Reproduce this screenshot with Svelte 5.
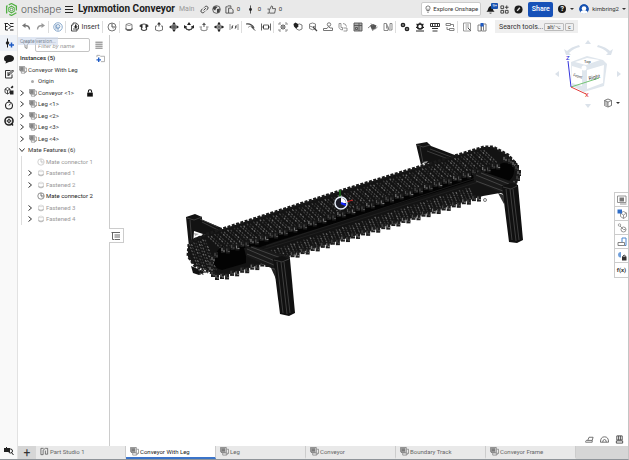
<script lang="ts">
  type Shape = { d: string; fill?: string; stroke?: string; w?: number };

  const ink = '#3b3b3b';
  const blue = '#1f5bc4';

  const line = (d: string, stroke = ink, w = 1.8): Shape => ({ d, stroke, w });
  const solid = (d: string, fill = ink): Shape => ({ d, fill });
  const circle = (x: number, y: number, r: number) =>
    `M${x - r} ${y}a${r} ${r} 0 1 0 ${r * 2} 0a${r} ${r} 0 1 0 ${-r * 2} 0`;

  // every icon is drawn on a 20 x 20 grid
  const icons: Record<string, Shape[]> = {
    versions: [line('M1 3h7M3 3v13h5M3 9h4M12 3h7M14 9h5M12 16h7', '#222', 2), line('M8 4l6 5-5 5', '#222', 2)],
    createVersion: [line('M7 1v18', '#222', 2), solid(circle(7, 10, 3.5), '#222'), line('M15 9v10M10 14h10', blue, 3)],
    chat: [solid('M10 2c6 0 10 3 10 7s-4 7-10 7l-7 3 1-4C1 14 0 12 0 9c0-4 4-7 10-7', '#1b1b1b')],
    note: [line('M13 3H3v15h13v-7M6 8h5M6 12h3', '#333', 2), line('M9 13l1-4 7-7 2 2-7 7z', '#222', 2)],
    cubes: [line('M2 8l5-3 5 3v7l-5 3-5-3zM2 8l5 3 5-3M7 11v7', '#222', 1.6), solid('M12 11h7v8h-7zM13 5l4-4 2 3-3 3z', '#222')],
    stopwatch: [line(circle(10, 11, 7), '#222', 2.2), line('M8 1h4M10 1v3M10 11l3-4', '#222', 2)],
    target: [line(circle(10, 10, 8), '#222', 3.2), line(circle(10, 10, 3), '#222', 2), line('M10 4v12M4 10h12', '#555', 1.2), line('M14 14l4 5', '#222', 3)],
    camera: [solid('M0 4h12v8H0z', '#222'), line(circle(13, 10, 4), '#222', 2), line('M15 13l4 5M3 5l3-3', '#222', 2)],
    undo: [line('M17 15c0-6-3-8-10-8', '#777', 2.6), solid('M9 2v10L2 7z', '#777')],
    redo: [line('M3 15c0-6 3-8 10-8', '#999', 2.6), solid('M11 2v10l7-5z', '#999')],
    sync: [line(circle(10, 10, 8.5), '#7d9fc6', 1.8), line(circle(10, 9, 3.8), '#7d9fc6', 2), line('M10 9v8M6 5v10', '#7d9fc6', 2)],
    insert: [line('M6 6H3v12h11v-4M6 6V2h6l5 4v8H6', ink, 1.8), solid('M10 5h3v4h3l-4.500 4L7 9h3z', '#222')],
    mateConnector: [line(circle(10, 10, 8), '#666', 1.8), line('M10 3v7h7', '#555', 2), line('M10 10l4 5', '#999', 1.5)],
    fastened: [solid('M3 12v3q7 6 14 0v-3q-7 5-14 0', '#444'), line('M4 5v9q6 5 12 0V5', '#777', 1.8), line('M4 5q6-5 12 0q-6 4-12 0', '#777', 1.5)],
    revolute: [line('M5 10v5q5 4 10 0v-5M2 7q8-6 16 0', '#444', 2.4), solid('M0 8l7-3v7zM20 8l-7-3v7z', '#222')],
    slider: [line('M3 8v8q7 4 14 0V8M3 8h3M14 8h3', '#666', 1.8), solid('M10 0l4 5H6zM9 5h2v4H9z', '#333')],
    planar: [line('M10 2v16M2 10h16', '#222', 2), line('M6 6h8v8H6z', '#444', 2), solid('M10 0l3 4H7zM10 20l3-4H7zM0 10l4-3v6zM20 10l-4-3v6z', '#222')],
    cylindrical: [line('M4 8v6q6 5 12 0V8M2 11q8 9 16 0', '#444', 2), solid('M10 0l4 6H6zM0 13V6l6 4zM20 13V6l-6 4z', '#222')],
    pinSlot: [line('M4 11v5q6 3 12 0v-5M1 10h5M14 10h5', '#777', 1.8), solid('M10 1l4 5H6zM9 5h2v5H9z', '#555')],
    ball: [line(circle(10, 10, 5), '#444', 1.8), line('M10 1v18M1 10h18', '#333', 1.8), solid('M10 0l3 4H7zM10 20l3-4H7zM0 10l4-3v6zM20 10l-4-3v6z', '#222')],
    parallel: [line('M2 4v12M18 4v12M5 14l3-8M12 14l3-8', '#888', 1.8), solid('M4 10l4-3v6zM16 10l-4-3v6z', '#555')],
    tangent: [line('M0 4q11-2 16 8', '#444', 2.4), line('M4 11q4-5 9-2M12 8l7 10', '#888', 1.6), solid('M9 9h5l3 8z', '#444')],
    width: [line('M1 3v14M19 3v14M5 6h10v8H5z', '#555', 1.8), solid('M2 10l4-3v6zM18 10l-4-3v6z', '#333')],
    group: [line('M2 6V2h4M14 2h4v4M18 14v4h-4M6 18H2v-4M5 5l10 10M15 5L5 15', '#777', 1.6), line(circle(10, 10, 4), '#555', 2)],
    replicate: [line('M6 7q7-6 12-1v8q-6 5-11 0z', '#666', 1.7), solid('M1 4l4-3 5 3 1 5-5 4-4-4z', '#222')],
    snap: [line('M3 4q6-4 12 0v9q-6 5-12 0zM3 8q6 4 12 0', '#777', 1.8), line('M10 10l8 8', '#444', 2.4)],
    linear: [line('M1 17h18v-5h-5l-3-3-3 4H1z', '#666', 1.8), line(circle(12, 5, 3.5), '#666', 1.7)],
    circular: [line('M2 3v8q2 5 7 5v-5H6V3zM11 18h7v-6h-7', '#888', 1.7), line('M10 3q6 0 7 6', '#888', 1.7)],
    frame: [solid('M2 2h16v16H2z', '#aaa'), line('M2 2h16v16H2zM2 7h16M12 2v16M5 11h4v4H5z', '#555', 1.8)],
    explode: [solid('M4 7l6-3 7 3-2 6-7 3z', '#555'), line('M0 12l6-5M13 15l6-5M6 3l3 4M9 18l2-4', '#777', 1.8)],
    section: [line('M2 3h5l5 13h6V3h-4v11M2 3v14h8V9', '#777', 1.7), line('M7 4v9', '#888', 1.8)],
    gears: [line(circle(6, 6, 3), '#222', 3.4), line(circle(14, 14, 3), '#222', 3.4)],
    gearCog: [line(circle(10, 9, 5), '#222', 3.2), line('M2 18h16M10 1v3M3 4l3 2M17 4l-3 2M2 11h3M15 11h3', '#222', 2.2)],
    screen: [line('M1 3h18v6H1zM5 3v6M10 3v6M15 3v6M4 13h12M5 18h10', '#333', 2)],
    relation: [line('M2 3h9v4H2zM9 13h9v4H9zM11 5h6v5M9 15H4v-5', '#777', 1.8)],
    bom: [line('M3 2h14v16H3zM7 6h7M7 10h7M7 14h3', '#888', 1.7), line('M12 12l5 5', '#444', 2)],
    appearance: [line('M2 6h6v12H2zM9 4h9v14H9zM13 5v12', '#777', 1.8), solid('M7 2h6v7H7z', blue)],
    link: [line('M8 12l5-5M9 6l3-3q3-1 5 1t0 5l-3 3M11 14l-3 3q-3 1-5-1t0-5l3-3', '#333', 2)],
    globe: [line(circle(10, 10, 8.5), '#444', 1.8), solid('M3 5q6-4 9 0l-3 3-2 4-5-3zM11 9l7-1-2 8-5 2z', '#444')],
    copy: [line('M6 4H2v14h6M8 7h6l4 4v7H8zM6 2h7v4', '#444', 1.9)],
    commit: [line('M10 1v18', '#333', 1.8), solid(circle(10, 10, 3.2), '#222')],
    thumb: [line('M1 9h4v9H1M6 10l4-8q4 0 2 6h7l-2 10H6', '#444', 1.8)],
    bulb: [line('M7 14q0-2-2-4-2-7 5-8 7 1 5 8-2 2-2 4zM8 18h4M10 9v5', '#444', 1.7)],
    bell: [solid('M1 15q3-2 4-7 1-5 5-6 4 1 5 6 1 5 4 7zM7 17h6q-3 4-6 0', '#1b1b1b')],
    apps: [line('M2 2h6v6H2zM2 12h6v6H2zM12 12h6v6h-6z', '#333', 2), line('M15 1v8M11 5h8', '#333', 2)],
    learn: [solid(circle(10, 10, 9), '#1b1b1b'), line('M7 13l6-7', '#ddd', 3)],
    filter: [line('M3 4h14l-5 6v7l-4-2v-5z', '#888', 1.8)],
    list: [line('M1 3h18M1 8h18M1 13h18M1 18h18', '#555', 2)],
    folder: [line('M2 7V3h6l2 2h9v12H11', '#999', 1.7), line('M6 8v10M1 13h10', blue, 3)],
    assembly: [solid('M2 2h10v11H2z', '#9a9a9a'), line('M1 1h13v12H5L1 10zM4 5h7M4 8h7', '#666', 1.5), line('M6 14v4h8l5-4V5h-4M14 18v-4h5', '#777', 1.5)],
    part: [line('M8 3H2v14h5V7l5-4h5v13h-5V8', '#555', 1.7)],
    lock: [solid('M3 9h14v10H3z', '#111'), line('M6 9V6q0-4 4-4t4 4v3', '#111', 2.6)],
    treeToggle: [line('M1 3h17M7 8h11M7 12h11M7 17h11M3 3v14h3', '#555', 1.8)],
    dimension: [line('M1 15l2-3h3l3-7h9l-2 7H6M16 12v4H1', '#555', 1.8)],
    protractor: [line('M1 16q0-12 9-12t9 12zM6 16q0-6 4-6t4 6', '#555', 1.8)],
    scale: [line('M4 2h12v9H4zM8 2v9M12 2v9M3 18h14V13H3z', '#444', 2)],
    cube: [line('M3 5l7-3 7 3v10l-7 3-7-3z', '#555', 1.6), solid('M3 5l7 3v10l-7-3z', '#bcbcbc'), line('M3 5l7 3 7-3M10 8v10', '#666', 1.5)],
    props: [line('M1 2h17v13H1zM6 18h13', '#888', 1.8), solid('M5 5h9v8H5z', '#777')],
    parts3d: [line('M7 8l6-3 6 3v7l-6 4-6-4zM7 8l6 4 6-4M13 12v7', '#888', 1.7), solid('M1 1h9v8H1z', '#2f6dc6')],
    mates: [line(circle(5, 4, 2.5), '#999', 1.8), line(circle(13, 13, 5), '#888', 1.8), line('M6 6l7 7h4', '#888', 1.8)],
    sheet: [line('M10 10V2h8v15h-3', '#4a87cf', 2), line('M2 11h13v6H2z', '#777', 1.8)],
    paint: [solid('M2 8q0-6 6-6v11q-5 1-6-5', '#6f9fdb'), solid('M10 11h9v8h-9z', '#333'), line('M11 11q3-6 7 0', '#333', 1.8)]
  };

  const toolGroups: string[][] = [
    ['mateConnector'],
    ['fastened', 'revolute', 'slider', 'planar', 'cylindrical', 'pinSlot', 'ball', 'parallel'],
    ['tangent', 'width'],
    ['group', 'replicate', 'snap', 'linear', 'circular', 'frame', 'explode', 'section'],
    ['gears', 'gearCog', 'screen', 'relation'],
    ['bom', 'appearance']
  ];

  const railItems = [
    ['createVersion', 'Create version'],
    ['chat', 'Comments'],
    ['note', 'Notes'],
    ['cubes', 'Configurations'],
    ['stopwatch', 'History'],
    ['target', 'Search']
  ];

  const instances = [
    { label: 'Conveyor <1>', locked: true },
    { label: 'Leg <1>' },
    { label: 'Leg <2>' },
    { label: 'Leg <3>' },
    { label: 'Leg <4>' }
  ];

  const mates = [
    { label: 'Mate connector 1', dim: true, leaf: true },
    { label: 'Fastened 1', dim: true },
    { label: 'Fastened 2', dim: true },
    { label: 'Mate connector 2', leaf: true },
    { label: 'Fastened 3', dim: true },
    { label: 'Fastened 4', dim: true }
  ];

  const tabs = ['Part Studio 1', 'Conveyor With Leg', 'Leg', 'Conveyor', 'Boundary Track', 'Conveyor Frame'];
  const sideTools = ['props', 'parts3d', 'mates', 'sheet', 'paint'];

  let activeTab = $state('Conveyor With Leg');
  let filter = $state('');

  // belt texture: small link segments laid on a skewed strip
  const shades = ['#525252', '#2e2e2e', '#6a6a6a', '#383838', '#454545'];

  function strip(x0: number, y0: number, dx: number, dy: number, cols: number, rows: number, rx: number, ry: number) {
    const out: string[] = ['', '', '', '', ''];
    for (let c = 0; c < cols; c++) {
      for (let r = 0; r < rows; r++) {
        const x = x0 + (dx * c) / cols + (rx * r) / rows;
        const y = y0 + (dy * c) / cols + (ry * r) / rows + (c % 2);
        out[(c * 7 + r * 5 + c * r * r) % 5] += `M${x.toFixed(1)} ${y.toFixed(1)}l1.200 1.600`;
      }
    }
    return out;
  }

  function edge(x0: number, y0: number, dx: number, dy: number, count: number) {
    return Array.from({ length: count }, (_, i) => ({
      x: x0 + (dx * i) / count,
      y: y0 + (dy * i) / count + (i % 2) * 2,
      light: i % 3 === 0
    }));
  }

  const topLinks = strip(208, 236, 279, -88, 86, 6, 14, 13);
  const lowLinks = strip(258, 254, 214, -68, 66, 5, 5, 12);
  const capLinks = strip(189, 244, 18, -6, 8, 10, 12, 32);
  const topTeeth = edge(221, 247, 280, -87, 58);
  const lowTeeth = edge(220, 273, 262, -81, 52);
  const rightTeeth = [[503, 156], [508, 158], [512, 161], [515, 165], [517, 170], [516, 175], [513, 180]];
  const leftTeeth = [[214, 252], [211, 256], [209, 261], [209, 266], [211, 271], [215, 274]];
</script>

{#snippet icon(name: string)}
  <svg class="icon" viewBox="0 0 20 20" aria-hidden="true">
    {#each icons[name] as s}
      <path d={s.d} fill={s.fill ?? 'none'} stroke={s.stroke ?? 'none'} stroke-width={s.w ?? 0} />
    {/each}
  </svg>
{/snippet}

{#snippet chevron(open: boolean)}
  <svg class="chevron" viewBox="0 0 6 6" aria-hidden="true">
    <path d={open ? 'M.5 1.500L3 4.500 5.500 1.500' : 'M1.500 .5L4.500 3 1.500 5.500'} />
  </svg>
{/snippet}

{#snippet teeth(items: { x: number; y: number; light: boolean }[])}
  {#each items as t}
    <rect x={t.x} y={t.y} width="4" height="6" fill="#1c1c1c" />
    <path d={`M${t.x + 1} ${t.y + 1}v3M${t.x + 2} ${t.y + 4}h2`} stroke={t.light ? '#808080' : '#505050'} stroke-width="1" />
  {/each}
{/snippet}

<div class="app">
  <header>
    <a class="brand" href="#home" aria-label="Home">
      <svg class="logo" viewBox="0 0 24 24" aria-hidden="true">
        <path d="M7 3.500L12 1l9 5v8M21 18l-9 5-4-2M4 19l-1-1V6l2-1" fill="none" stroke="#52b043" stroke-width="2.4" />
        <path d="M12 6l5 3v6l-5 3-5-3V9z" fill="#fff" stroke="#52b043" stroke-width="2" />
        <circle cx="12" cy="12" r="2.500" fill="none" stroke="#3c7d35" stroke-width="1.500" />
      </svg>
      <span>onshape</span>
    </a>
    <button class="menu" aria-label="Menu"><i></i><i></i><i></i></button>
    <h1>Lynxmotion Conveyor</h1>
    <span class="branch">Main</span>
    <div class="doc-tools">
      <button aria-label="Share link">{@render icon('link')}</button>
      <button aria-label="Public">{@render icon('globe')}</button>
      <button class="count">{@render icon('copy')}0</button>
      <button class="count">{@render icon('commit')}0</button>
      <button class="count">{@render icon('thumb')}0</button>
    </div>
    <div class="account">
      <button class="explore">{@render icon('bulb')}Explore Onshape</button>
      <button class="round bell" aria-label="Notifications">{@render icon('bell')}<span class="badge">9+</span></button>
      <button class="round" aria-label="Apps">{@render icon('apps')}</button>
      <button class="round" aria-label="Learning">{@render icon('learn')}</button>
      <button class="share">Share</button>
      <button class="help" aria-label="Help"><b>?</b><span class="caret"></span></button>
      <button class="user">
        <svg class="avatar" viewBox="0 0 22 22" aria-hidden="true">
          <circle cx="11" cy="11" r="11" fill="#1651b0" />
          <circle cx="11" cy="10" r="5" fill="#fff" />
          <path d="M2 22q0-8 9-8t9 8z" fill="#fff" />
        </svg>
        kimbring2<span class="caret"></span>
      </button>
    </div>
  </header>

  <div class="toolbar">
    <button class="tool rail-head" aria-label="Versions and history">{@render icon('versions')}</button>
    <button class="tool" aria-label="Undo">{@render icon('undo')}</button>
    <button class="tool" aria-label="Redo">{@render icon('redo')}</button>
    <span class="sep"></span>
    <button class="tool" aria-label="Update">{@render icon('sync')}</button>
    <span class="sep"></span>
    <button class="insert">{@render icon('insert')}Insert</button>
    {#each toolGroups as group}
      <span class="sep"></span>
      {#each group as name}
        <button class="tool" aria-label={name}>{@render icon(name)}</button>
      {/each}
    {/each}
    <button class="search">Search tools... <kbd>alt/⌥</kbd><kbd>c</kbd></button>
  </div>

  <main>
    <nav class="rail">
      {#each railItems as [name, label], i}
        <button class:active={i === 0} aria-label={label}>{@render icon(name)}</button>
      {/each}
      <button class="last" aria-label="Camera">{@render icon('camera')}</button>
    </nav>

    <aside>
      <div class="filter">
        {@render icon('filter')}
        <input type="text" placeholder="Filter by name" aria-label="Filter by name" bind:value={filter} />
        <button aria-label="List options">{@render icon('list')}</button>
        <span class="tooltip">Create version...</span>
      </div>
      <div class="heading">
        <h2>Instances (5)</h2>
        <button aria-label="New folder">{@render icon('folder')}</button>
      </div>
      <ul class="tree">
        <li class="root">{@render icon('assembly')}Conveyor With Leg</li>
        <li class="origin"><span class="dot"></span>Origin</li>
        {#each instances as item}
          <li>
            {@render chevron(false)}{@render icon('assembly')}{item.label}
            {#if item.locked}<span class="lock">{@render icon('lock')}</span>{/if}
          </li>
        {/each}
        <li class="folder">{@render chevron(true)}Mate Features (6)</li>
        {#each mates as item}
          <li class="mate" class:dim={item.dim}>
            <span class="slot">{#if !item.leaf}{@render chevron(false)}{/if}</span>
            {@render icon(item.leaf ? 'mateConnector' : 'fastened')}{item.label}
          </li>
        {/each}
      </ul>
    </aside>

    <section class="viewport">
      <svg class="model" viewBox="110 35 518 411" preserveAspectRatio="xMidYMid meet" role="img" aria-label="Conveyor assembly">
        <!-- rear legs -->
        <path d="M186 217l9-3 7 3v3l20 8-5 11-14-5-9-3-1 14-4 2z" fill="#121212" />
        <path d="M187 218l7 2 8-3M190 220l2 24M202 222l18 9M200 219l18 8" stroke="#3c3c3c" fill="none" />
        <path d="M194 233l5 1-4 2z" fill="#aaa" />
        <path d="M416 144l11-2 4 4 29 11-5 9-32-3-2 2z" fill="#121212" />
        <path d="M417 145l6 2 7-2M420 147l3 16M427 151l24 9M430 149l24 9" stroke="#3c3c3c" fill="none" />
        <path d="M423 162l5-1-3 4z" fill="#999" />
        <!-- belt body -->
        <path d="M191 266l2 7 6 2 6-3z" fill="#111" />
        <path d="M207 234L340 191 484 147l9 0 15 8 8 9 2 12-3 9-15 8-17 3-145 45-115 35-7-2-21-8-7-9 0-12 6-7z" fill="#131313" />
        <path
          d="M190 242L207 234 340 191 484 147l9 0 15 8 8 9 2 12-3 9M189 244l-1 12 7 10 22 9"
          fill="none"
          stroke="#1a1a1a"
          stroke-width="3"
          stroke-dasharray="3 1.500"
        />
        <g fill="none" stroke-width="1.200">
          {#each topLinks as d, i}<path {d} stroke={shades[i]} />{/each}
          {#each lowLinks as d, i}<path {d} stroke={shades[i]} />{/each}
          {#each capLinks as d, i}<path {d} stroke={shades[i]} />{/each}
        </g>
        {@render teeth(lowTeeth)}
        <!-- inside of the belt loop -->
        <path d="M223 251l24-7 232-73 24-8q9 0 11 6 1 9-9 15l-24-6-54 17-153 47-28 10v11l-24 7q-10-2-8-12 3-9 9-12z" fill="#030303" />
        <path d="M262 250L478 182" stroke="#1f1f1f" />
        <path d="M266 246L476 178" stroke="#292929" stroke-width=".6" />
        {@render teeth(topTeeth)}
        {@render teeth([...rightTeeth, ...leftTeeth].map(([x, y], i) => ({ x, y, light: i % 2 === 0 })))}
        <!-- front left leg -->
        <path d="M244 248l9-2 37 11-2 7-15 5-27-13z" fill="#191919" />
        <path d="M247 249l28 12M251 247l30 11M247 254l27 11" stroke="#444" fill="none" />
        <path d="M273 259l9-3 8 3 5 54-6 3-9-2z" fill="#101010" />
        <path d="M274 260l8 2 7-3M277 262l6 51M284 262l6 51M281 262l6 52" stroke="#3d3d3d" fill="none" />
        <path d="M271 268l5 2v9z" fill="#222" />
        <!-- front right leg -->
        <path d="M473 174l8-3 35 12-1 7-12 4-29-13z" fill="#191919" />
        <path d="M476 175l27 11M481 173l28 11M476 181l27 10" stroke="#444" fill="none" />
        <path d="M502 186l10-3 6 2 5 55-6 3-8-1z" fill="#101010" />
        <path d="M503 187l8 2 6-3M506 189l6 51M513 189l6 51M510 189l6 52" stroke="#3d3d3d" fill="none" />
        <path d="M498 193l6 2v9z" fill="#333" />
        <circle cx="485" cy="200" r="1.500" fill="none" stroke="#777" />
        <!-- busy marker on the mate origin -->
        <path d="M340 197v-7" stroke="#1ba11b" />
        <path d="M346 202l7-2" stroke="#c81e1e" />
        <circle cx="341" cy="203" r="6" fill="#1c1c28" stroke="#e6eef8" stroke-width="1.500" />
        <path d="M341 203v-5a5 5 0 0 1 5 5z" fill="#fff" />
        <path d="M341 203l5 2" stroke="#1426ff" stroke-width="2" />
      </svg>

      <button class="panel-toggle" aria-label="Toggle tree">{@render icon('treeToggle')}</button>

      <svg class="view-cube" viewBox="555 38 68 72" role="img" aria-label="View cube">
        <g fill="#dbe2ea">
          <path d="M588 40l3 4h-6zM588 108l3-4h-6zM555 74l4-3v6zM621 74l-4-3v6z" />
          <path d="M564 49l2 6 5 0-2-2q5-5 11-6l-1-2q-8 2-12 6zM613 49l-2 6-5 0 2-2q-5-5-11-6l1-2q8 2 12 6z" />
        </g>
        <path d="M571 62l16-6 16 4 4 4-3 22-20 6-12-6z" fill="#dfe6ed" />
        <path d="M575 62l12-4 13 2-14 5zM572 66l10 3v17l-10-3zM587 70l17-5-1 18-16 6z" fill="#fff" />
        <circle cx="584" cy="68" r="2.500" fill="#fff" />
        <path d="M571 87l28-9" stroke="#73c473" />
        <path d="M571 87l-3-26" stroke="#3535dd" />
        <path d="M571 87l15 7" stroke="#e23c3c" />
        <text class="axis-z" x="566" y="60" font-size="6">Z</text>
        <text class="axis-x" x="585" y="97" font-size="6">X</text>
        <text x="589" y="80" font-size="5" transform="rotate(-12 589 80)">Right</text>
        <text x="573" y="76" font-size="4" transform="rotate(18 573 76)">Front</text>
        <text x="584" y="63" font-size="4">Top</text>
      </svg>
      <button class="view-menu" aria-label="View options">{@render icon('cube')}<span class="caret"></span></button>

      <div class="side-tools">
        {#each sideTools as name}
          <button aria-label={name}>{@render icon(name)}</button>
        {/each}
        <button class="fx">f(x)</button>
      </div>

      <div class="measure">
        <button aria-label="Measure">{@render icon('dimension')}</button>
        <button aria-label="Protractor">{@render icon('protractor')}</button>
        <button aria-label="Mass properties">{@render icon('scale')}</button>
      </div>
    </section>
  </main>

  <footer>
    <button class="add" aria-label="Add tab">+</button>
    {#each tabs as name}
      <button class="tab" class:active={name === activeTab} onclick={() => (activeTab = name)}>
        {@render icon(name === 'Part Studio 1' ? 'part' : 'assembly')}{name}
      </button>
    {/each}
  </footer>
</div>

<style>
  :global(body) {
    margin: 0;
    background: #fff;
  }

  .app {
    display: flex;
    flex-direction: column;
    height: 100vh;
    box-sizing: border-box;
    border-right: 1px solid #c4c4c4;
    border-bottom: 1px solid #8f9499;
    overflow: hidden;
    font: 6px/8px Roboto, 'Open Sans', sans-serif;
    color: #333;
  }

  button {
    display: flex;
    align-items: center;
    justify-content: center;
    margin: 0;
    padding: 0;
    border: 0;
    background: none;
    color: inherit;
    font: inherit;
    cursor: pointer;
  }

  .icon {
    display: block;
    flex: none;
    width: 10px;
    height: 10px;
  }

  .caret {
    border: 2px solid transparent;
    border-top-color: #333;
    border-bottom: 0;
  }

  header {
    display: flex;
    align-items: center;
    flex: none;
    height: 18px;
    padding-left: 5px;
    background: #e9e9e9;
    white-space: nowrap;
  }

  .brand {
    display: flex;
    align-items: center;
    gap: 3px;
    width: 60px;
    color: #555;
    font: 300 10px/14px Inter, sans-serif;
    text-decoration: none;
  }

  .logo {
    flex: none;
    width: 13px;
    height: 13px;
  }

  .menu {
    flex-direction: column;
    gap: 2px;
    width: 8px;
  }

  .menu i {
    width: 8px;
    height: 1px;
    background: #222;
  }

  h1 {
    margin: 0 0 0 5px;
    color: #1c1c1c;
    font: bold 10px/14px Roboto, sans-serif;
  }

  .branch {
    margin-left: 4px;
    color: #999;
    font-size: 7px;
  }

  .doc-tools {
    display: flex;
    align-items: center;
    gap: 3px;
    margin-left: 5px;
  }

  .doc-tools .icon {
    width: 9px;
    height: 9px;
  }

  .count {
    gap: 3px;
    width: 18px;
  }

  .account {
    display: flex;
    align-items: center;
    gap: 5px;
    margin-left: auto;
    padding-right: 2px;
  }

  .explore {
    gap: 1px;
    height: 14px;
    padding: 0 2px;
    border: 1px solid #ccc;
    border-radius: 2px;
    background: #fff;
  }

  .explore .icon {
    width: 8px;
  }

  .round .icon {
    width: 9px;
    height: 9px;
  }

  .bell {
    position: relative;
  }

  .badge {
    position: absolute;
    top: -2px;
    right: -3px;
    width: 7px;
    border-radius: 1px;
    background: #1651b0;
    color: #fff;
    font-size: 4px;
    line-height: 6px;
  }

  .share {
    width: 25px;
    height: 15px;
    border-radius: 2px;
    background: #1651b8;
    color: #fff;
    font-size: 7px;
    font-weight: 500;
  }

  .help {
    gap: 4px;
  }

  .help b {
    width: 8px;
    border-radius: 4px;
    background: #1b1b1b;
    color: #fff;
    font-size: 7px;
  }

  .user {
    gap: 3px;
  }

  .avatar {
    width: 10px;
    height: 10px;
    border-radius: 5px;
  }

  .toolbar {
    display: flex;
    align-items: center;
    flex: none;
    height: 17px;
    background: #fff;
  }

  .tool {
    width: 15px;
    height: 17px;
  }

  .toolbar .rail-head {
    box-sizing: border-box;
    width: 18px;
    border-right: 1px solid #e2e2e2;
    background: #f9f9f9;
  }

  .sep {
    width: 1px;
    height: 12px;
    margin-right: 1px;
    background: #ddd;
  }

  .insert {
    gap: 2px;
    width: 35px;
    font-size: 7px;
  }

  .search {
    gap: 1px;
    height: 13px;
    margin-left: 6px;
    padding: 0 4px;
    background: #efefef;
    font-size: 7px;
  }

  kbd {
    padding: 0 2px;
    border: 1px solid #bbb;
    border-radius: 1px;
    font: 5px/6px Roboto, sans-serif;
  }

  main {
    display: flex;
    flex: 1;
    min-height: 0;
  }

  .rail {
    display: flex;
    flex-direction: column;
    width: 17px;
    margin-bottom: -13px;
    border-right: 1px solid #e2e2e2;
    background: #f9f9f9;
  }

  .rail button {
    height: 16px;
  }

  .rail button:nth-child(even) {
    height: 15px;
  }

  .rail .active {
    background: #edf1f7;
  }

  .rail .last {
    margin-top: auto;
  }

  aside {
    box-sizing: border-box;
    width: 92px;
    border-right: 1px solid #ccc;
  }

  .filter {
    position: relative;
    display: flex;
    align-items: center;
    margin-top: 3px;
    padding-left: 3px;
  }

  .filter input {
    box-sizing: border-box;
    width: 55px;
    height: 14px;
    margin: 0 5px 0 4px;
    padding: 0 2px;
    border: 1px solid #c4c4c4;
    border-radius: 2px;
    background: #fff;
    font: italic 6px/10px Roboto, sans-serif;
  }

  .filter input::placeholder {
    color: #999;
  }

  .filter button .icon {
    width: 8px;
    height: 8px;
  }

  .tooltip {
    position: absolute;
    top: -1px;
    left: 0;
    padding: 0 2px;
    background: rgba(205, 217, 236, 0.6);
    color: #7f8894;
    font-size: 5px;
  }

  .heading {
    display: flex;
    align-items: center;
    justify-content: space-between;
    height: 12px;
    padding-right: 4px;
  }

  .heading .icon {
    width: 9px;
    height: 9px;
  }

  h2 {
    margin: 0 0 0 2px;
    font-size: 6px;
    font-weight: 500;
    color: #222;
  }

  .tree {
    margin: 0;
    padding: 0;
    list-style: none;
  }

  .tree li {
    display: flex;
    align-items: center;
    height: 11px;
    padding-left: 1px;
    white-space: nowrap;
  }

  .tree li:nth-child(even) {
    height: 12px;
  }

  .tree .icon {
    width: 8px;
    height: 8px;
    margin-right: 1px;
  }

  .chevron {
    width: 6px;
    height: 6px;
    margin-right: 4px;
    fill: none;
    stroke: #333;
    stroke-width: 1;
  }

  .origin .dot {
    width: 3px;
    height: 3px;
    margin: 0 4px 0 12px;
    border-radius: 2px;
    background: #aaa;
  }

  .lock {
    margin-left: 12px;
  }

  .folder .chevron {
    margin-right: 3px;
  }

  .tree .mate {
    margin-left: 3px;
    padding-left: 5px;
    border-left: 1px solid #ddd;
    color: #222;
  }

  .slot {
    width: 10px;
    height: 6px;
  }

  .slot .chevron {
    display: block;
  }

  .tree .dim {
    color: #999;
  }

  .dim > .icon {
    opacity: 0.4;
  }

  .viewport {
    position: relative;
    flex: 1;
    min-width: 0;
  }

  .model {
    display: block;
    width: 100%;
    height: 100%;
  }

  .panel-toggle {
    position: absolute;
    top: 193px;
    left: -1px;
    width: 15px;
    height: 15px;
    border: 1px solid #ccc;
    border-left: 0;
    background: #fff;
  }

  .view-cube {
    position: absolute;
    top: 3px;
    right: 5px;
    width: 68px;
    height: 72px;
    fill: none;
  }

  .view-cube text {
    fill: #333;
    font-family: Roboto, sans-serif;
  }

  .view-cube .axis-z {
    fill: #2525d8;
  }

  .view-cube .axis-x {
    fill: #e02020;
  }

  .view-menu {
    position: absolute;
    top: 63px;
    right: 8px;
    gap: 3px;
  }

  .side-tools {
    position: absolute;
    top: 157px;
    right: 0;
    border: 1px solid #ccc;
    border-right: 0;
    background: #fff;
  }

  .side-tools button {
    width: 13px;
    height: 14px;
    border-bottom: 1px solid #ccc;
  }

  .side-tools .fx {
    border-bottom: 0;
    font-weight: bold;
  }

  .measure {
    position: absolute;
    right: 4px;
    bottom: 2px;
    display: flex;
    gap: 6px;
  }

  .measure .icon {
    width: 9px;
    height: 9px;
  }

  footer {
    display: flex;
    flex: none;
    height: 13px;
    margin-left: 18px;
    background: #d6d6d6;
  }

  .add {
    width: 18px;
    font-size: 12px;
  }

  .tab {
    flex: 0 1 90px;
    box-sizing: border-box;
    justify-content: flex-start;
    gap: 1px;
    padding-left: 4px;
    border-right: 1px solid #ccc;
    border-bottom: 2px solid #e9e9e9;
    background: #e9e9e9;
    color: #666;
    white-space: nowrap;
  }

  .tab .icon {
    width: 9px;
    height: 9px;
  }

  .tab.active {
    border-bottom-color: #3b74c9;
    background: #fff;
    color: #222;
  }
</style>
